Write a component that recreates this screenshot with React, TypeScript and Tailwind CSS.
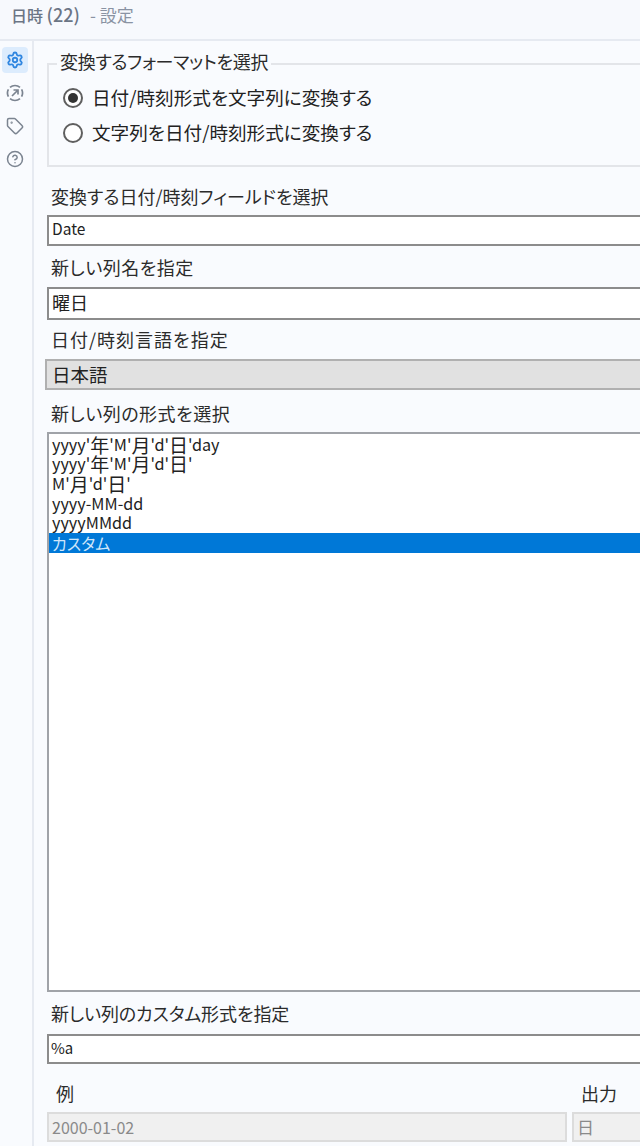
import { Settings, CircleHelp, Tag } from "lucide-react";

const font = { fontFamily: '"Noto Sans CJK JP", "Noto Sans", sans-serif' };

function Label({ text, className }: { text: string; className: string }) {
  return <div className={`text-[18px] leading-[24px] text-[#2b2b2b] [font-feature-settings:'palt'] ${className}`}>{text}</div>;
}

function Radio({ checked, text }: { checked?: boolean; text: string }) {
  return (
    <div className="flex h-[24px] items-center">
      <div className="flex h-[20px] w-[20px] items-center justify-center rounded-full border-2 border-[#5f5f5f] bg-white">
        {checked && <div className="h-[10px] w-[10px] rounded-full bg-[#333333]" />}
      </div>
      <span className="mb-[2px] ml-[9px] text-[18.6px] text-[#222222] [font-feature-settings:'palt']">{text}</span>
    </div>
  );
}

function Big({ children }: { children: string }) {
  return <span className="inline-block h-[19px] text-[19px] leading-[19px]">{children}</span>;
}

export default function App() {
  const row = "flex items-center pb-[2px] pl-[3px] text-[16.2px] leading-[17px] text-[#222222] whitespace-pre";
  return (
    <div className="flex h-[1146px] w-[640px] flex-col overflow-hidden bg-[#f9fbfe]" style={font}>
      <div className="flex h-[41px] shrink-0 items-center border-b-2 border-[#e6eaf1] bg-[#f7f9fd] pb-[10px] pl-[11px] text-[16px] text-[#6b7585]">
        <span className="font-medium">日時 <span className="text-[18px]">(22)</span></span>
        <span className="ml-[10px] text-[17px] text-[#8a93a3]">- 設定</span>
      </div>
      <div className="flex min-h-0 flex-1">
        <div className="flex w-[34px] shrink-0 flex-col items-center gap-[7px] border-r-2 border-[#e6eaf1] pr-[2px] pt-[6px]">
          <div className="flex h-[26px] w-[26px] items-center justify-center rounded-[4px] bg-[#dcecfd]">
            <Settings size={18} className="text-[#2f86e0]" strokeWidth={2.4} />
          </div>
          <div className="flex h-[26px] w-[26px] items-center justify-center">
            <svg width="18" height="18" viewBox="0 0 18 18" fill="none" stroke="#7b8490" strokeWidth="1.7">
              <path d="M4 3.4A7.6 7.6 0 0 1 14 3.4M15.6 5.4a7.6 7.6 0 0 1 0 7.2M14 14.6a7.6 7.6 0 0 1-10 0M2.4 12.6a7.6 7.6 0 0 1 0-7.2" />
              <path d="M6 12l6-6M7.5 6h4.5v4.5" />
            </svg>
          </div>
          <div className="flex h-[26px] w-[26px] items-center justify-center">
            <Tag size={18} className="text-[#7b8490]" strokeWidth={2} />
          </div>
          <div className="flex h-[26px] w-[26px] items-center justify-center">
            <CircleHelp size={18} className="text-[#7b8490]" strokeWidth={2} />
          </div>
        </div>
        <div className="w-[606px] shrink-0 pl-[13px]">
          <div className="relative mt-[22px] h-[104px] w-[620px] border-2 border-[#e3e5e9] pl-[14px] pt-[21px]">
            <div className="absolute -top-[16px] left-[8px] bg-[#f9fbfe] px-[3px] text-[18px] leading-[24px] tracking-[-0.3px] text-[#2b2b2b] [font-feature-settings:'palt']">変換するフォーマットを選択</div>
            <div className="flex flex-col gap-[11px]">
              <Radio checked text="日付/時刻形式を文字列に変換する" />
              <Radio text="文字列を日付/時刻形式に変換する" />
            </div>
          </div>
          <Label text="変換する日付/時刻フィールドを選択" className="ml-[4px] mt-[17px]" />
          <div className="mt-[7px] flex h-[31px] w-[620px] items-center border-2 border-[#8c8c8c] bg-white pb-[3px] pl-[3px] text-[15.5px] text-[#222222]">Date</div>
          <Label text="新しい列名を指定" className="ml-[4px] mt-[9px] tracking-[0.5px]" />
          <div className="mt-[8px] flex h-[33px] w-[620px] items-center border-2 border-[#8c8c8c] bg-white pb-[3px] pl-[3px] text-[18px] text-[#222222]">曜日</div>
          <Label text="日付/時刻言語を指定" className="ml-[4px] mt-[7px] tracking-[1px]" />
          <div className="-ml-[2px] mt-[8px] flex h-[31px] w-[622px] items-center border-2 border-[#b0b0b0] bg-[#e1e1e1] pl-[5px] text-[18.5px] text-[#222222]">日本語</div>
          <Label text="新しい列の形式を選択" className="ml-[4px] mt-[11px] tracking-[0.5px]" />
          <div className="mt-[7px] h-[560px] w-[620px] border-2 border-[#a0a3a8] bg-white pt-[1px]">
            <div className={`${row} h-[20px]`}>yyyy'<Big>年</Big>'M'<Big>月</Big>'d'<Big>日</Big>'day</div>
            <div className={`${row} h-[19px]`}>yyyy'<Big>年</Big>'M'<Big>月</Big>'d'<Big>日</Big>'</div>
            <div className={`${row} h-[20px]`}>M'<Big>月</Big>'d'<Big>日</Big>'</div>
            <div className={`${row} h-[20px]`}>yyyy-MM-dd</div>
            <div className={`${row} h-[19px]`}>yyyyMMdd</div>
            <div className="flex h-[20px] items-center bg-[#0078d7] pl-[3px] text-[16px] leading-[20px] text-[#cfe6fa] [font-feature-settings:'palt']">カスタム</div>
          </div>
          <Label text="新しい列のカスタム形式を指定" className="ml-[4px] mt-[9px] tracking-[-0.1px]" />
          <div className="mt-[9px] flex h-[30px] w-[620px] items-center border-2 border-[#8c8c8c] bg-white pb-[2px] pl-[2px] text-[15px] text-[#222222]">%a</div>
          <div className="mt-[17px] flex h-[24px] items-center text-[18px] text-[#2b2b2b]">
            <span className="ml-[9px]">例</span>
            <span className="ml-[507px]">出力</span>
          </div>
          <div className="mt-[7px] flex gap-[5px]">
            <div className="flex h-[30px] w-[520px] shrink-0 items-center border-2 border-[#dcdcdc] bg-[#f0f0f0] pl-[3px] text-[16px] text-[#8a8a8a]">2000-01-02</div>
            <div className="flex h-[30px] w-[100px] shrink-0 items-center border-2 border-[#dcdcdc] bg-[#f0f0f0] pl-[3px] text-[17px] text-[#8a8a8a]">日</div>
          </div>
        </div>
      </div>
    </div>
  );
}
